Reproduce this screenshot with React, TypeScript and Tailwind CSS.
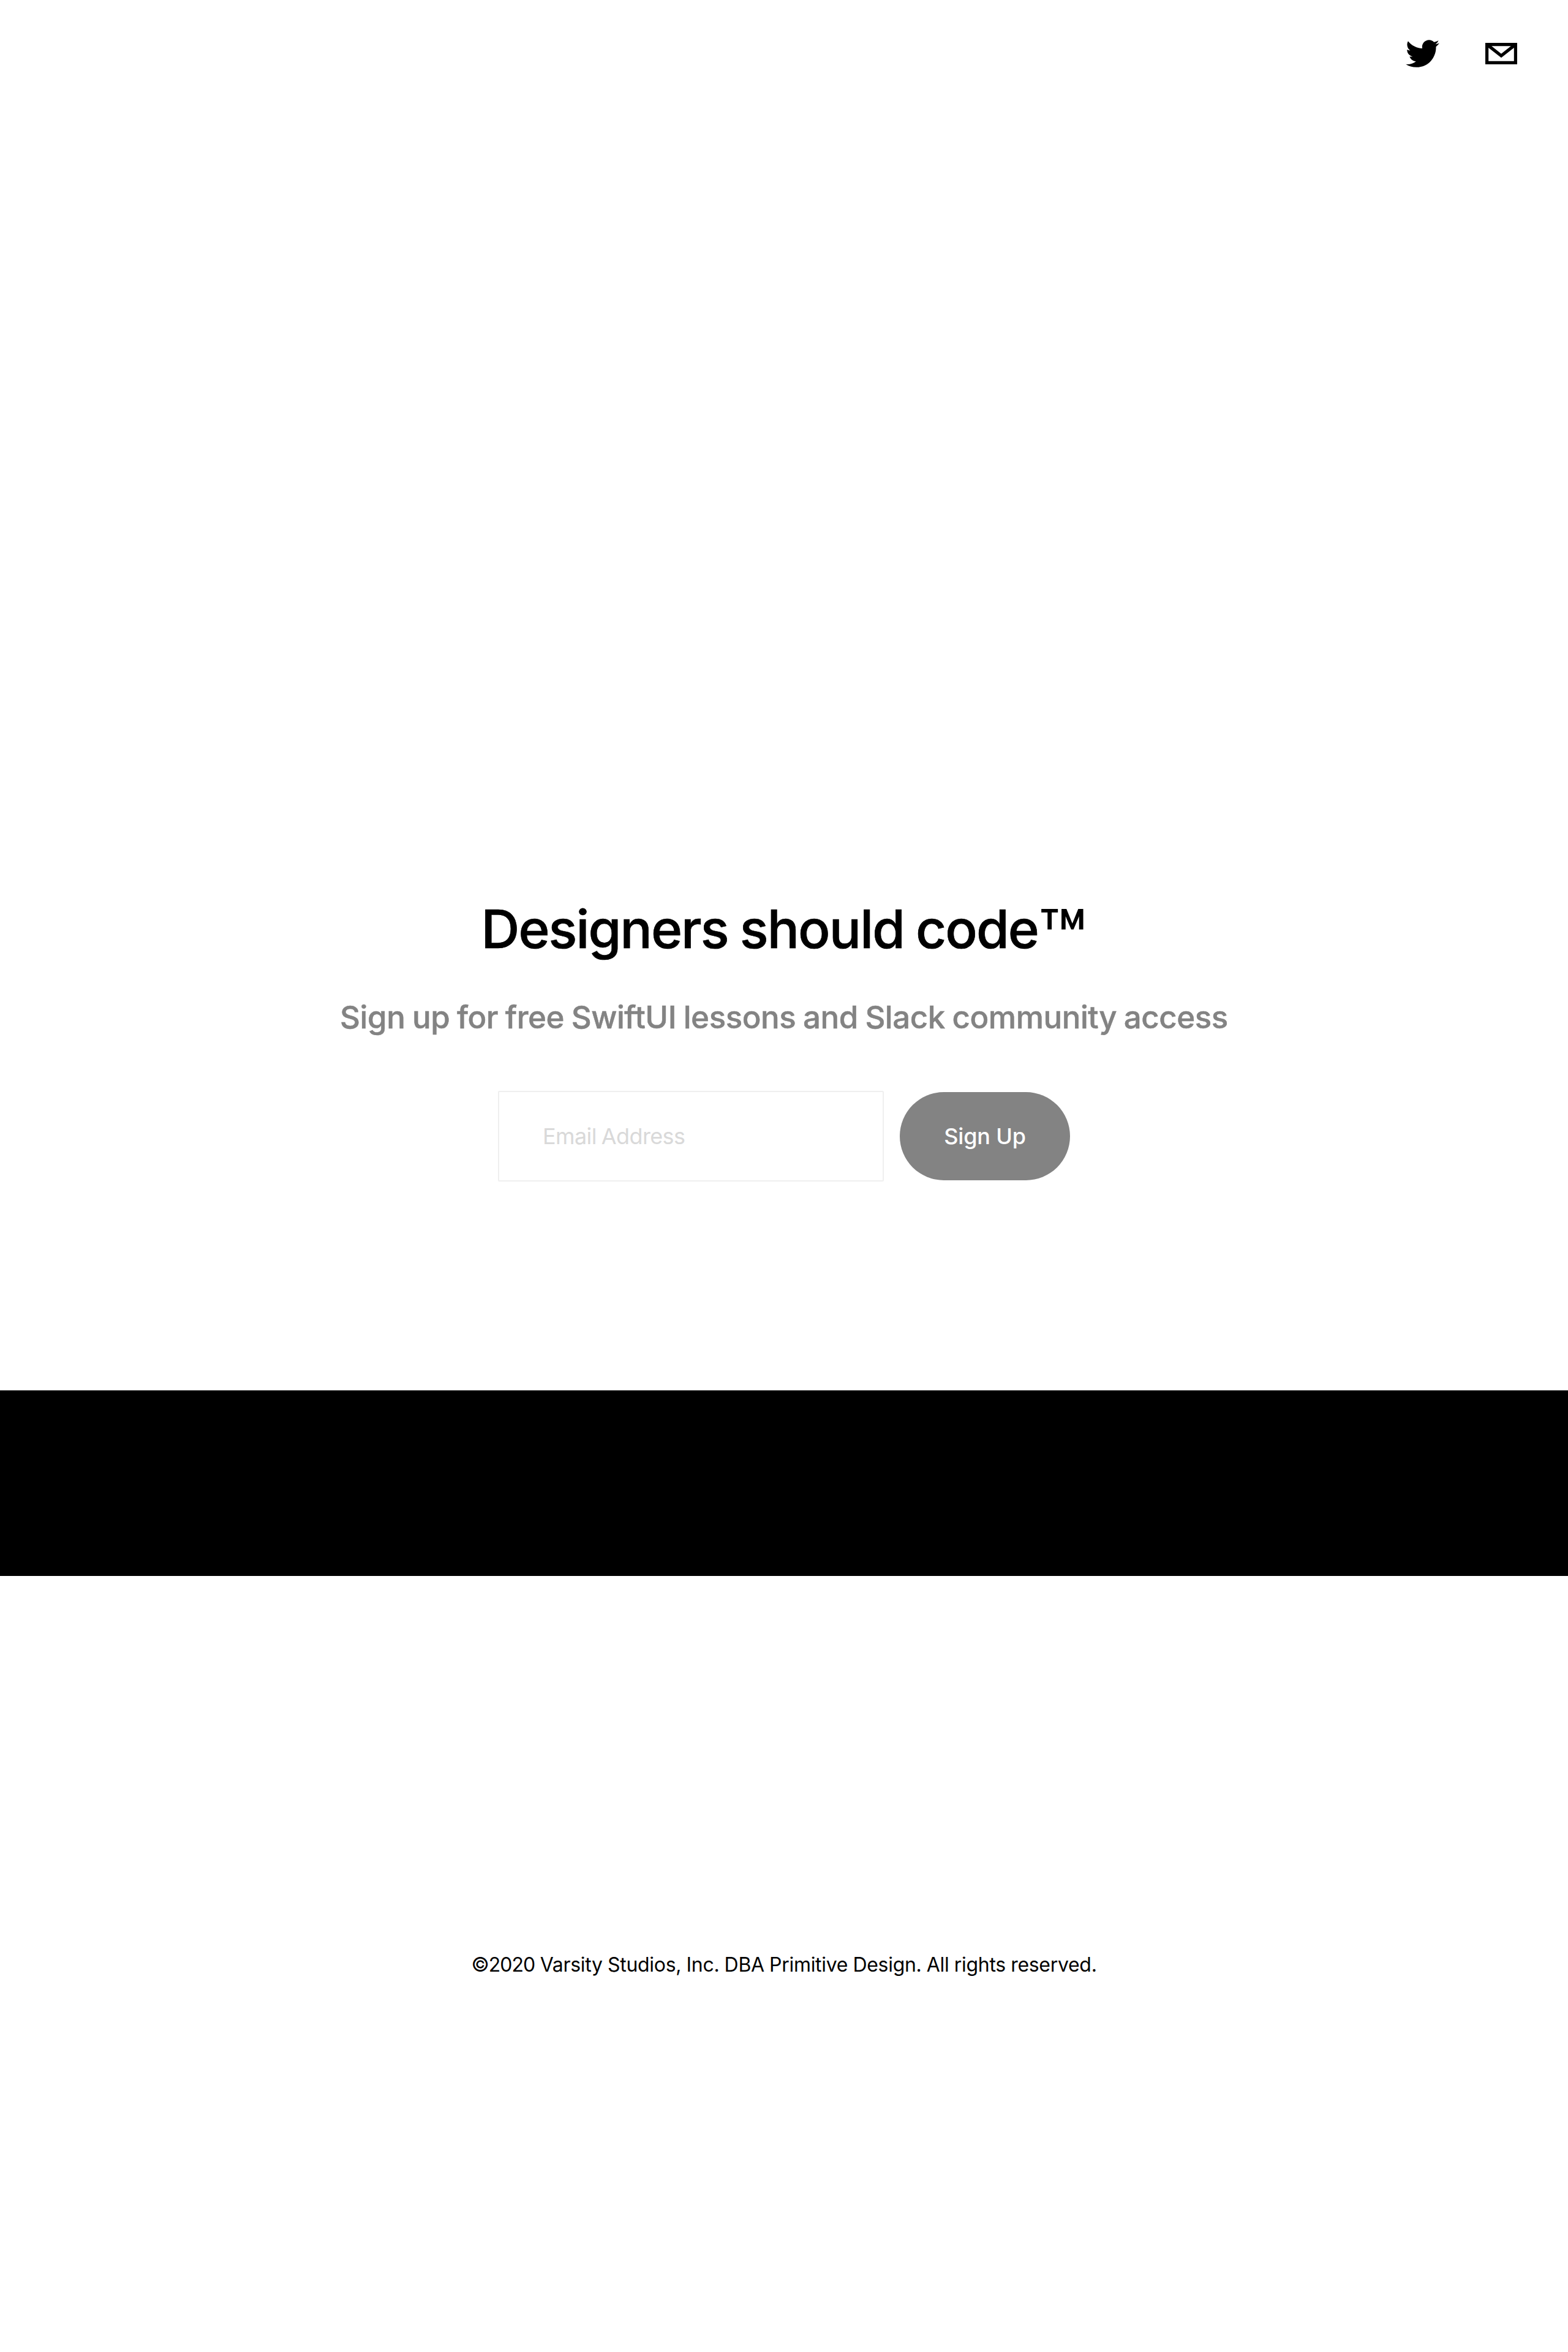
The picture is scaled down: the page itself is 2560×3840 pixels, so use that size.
function TwitterIcon() {
  return (
    <svg viewBox="16 19 32 26" className="h-[45px] w-[55px]" fill="currentColor" aria-hidden="true">
      <path d="M48,22.1c-1.2,0.5-2.4,0.9-3.8,1c1.4-0.8,2.4-2.1,2.9-3.6c-1.3,0.8-2.7,1.3-4.2,1.6C41.7,19.8,40,19,38.2,19c-3.6,0-6.6,2.9-6.6,6.6c0,0.5,0.1,1,0.2,1.5c-5.5-0.3-10.3-2.9-13.5-6.9c-0.6,1-0.9,2.1-0.9,3.3c0,2.3,1.2,4.3,2.9,5.5c-1.1,0-2.1-0.3-3-0.8c0,0,0,0.1,0,0.1c0,3.2,2.3,5.8,5.3,6.4c-0.6,0.1-1.1,0.2-1.7,0.2c-0.4,0-0.8,0-1.2-0.1c0.8,2.6,3.3,4.5,6.1,4.6c-2.2,1.8-5.1,2.8-8.2,2.8c-0.5,0-1.1,0-1.6-0.1c2.9,1.9,6.4,2.9,10.1,2.9c12.1,0,18.7-10,18.7-18.7c0-0.3,0-0.6,0-0.8C46,24.5,47.1,23.4,48,22.1z" />
    </svg>
  );
}

function MailIcon() {
  return (
    <svg viewBox="17 22 30 20" className="h-[35px] w-[52px]" preserveAspectRatio="none" fill="currentColor" aria-hidden="true">
      <path d="M17,22v20h30V22H17z M41.1,25L32,32.1L22.9,25H41.1z M20,39V26.6l12,9.3l12-9.3V39H20z" />
    </svg>
  );
}

export default function App() {
  return (
    <div className="flex h-[3840px] w-[2560px] flex-col bg-white font-['Inter',sans-serif] text-black">
      <header className="flex h-[174px] items-center justify-end gap-[75px] pr-[83px]">
        <a href="#" aria-label="Twitter">
          <TwitterIcon />
        </a>
        <a href="#" aria-label="Email">
          <MailIcon />
        </a>
      </header>

      <main className="flex h-[2096px] flex-col items-center pt-[1291px]">
        <h1 className="h-[104px] text-[87px] leading-[104px] font-medium tracking-[-1.93px] whitespace-nowrap [-webkit-text-stroke:0.7px_currentColor] [word-spacing:-2.2px]">
          Designers should code
          <span className="align-[-29px] text-[128px] leading-0 tracking-normal [-webkit-text-stroke:0px]">™</span>
        </h1>
        <p className="mt-[56px] text-[51px] leading-[72px] font-medium tracking-[-0.45px] whitespace-nowrap text-[#838383] [-webkit-text-stroke:0.5px_currentColor] [word-spacing:-1.5px]">
          Sign up for free SwiftUI lessons and Slack community access
        </p>
        <form className="mt-[84px] flex items-center gap-[26px]">
          <input
            type="email"
            placeholder="Email Address"
            className="h-[148px] w-[630px] rounded-[2px] border-2 border-[#efefef] bg-white px-[71px] text-[36px] tracking-[-0.6px] [word-spacing:-1.6px] placeholder:text-[#d9d9d9]"
          />
          <button
            type="button"
            className="h-[144px] w-[278px] rounded-full bg-[#838383] text-[36px] font-medium tracking-[-0.15px] text-white"
          >
            Sign Up
          </button>
        </form>
      </main>

      <section className="h-[303px] bg-black" />

      <footer className="pt-[611px] text-center">
        <p className="text-[32px] leading-[48px] tracking-[-0.3px] whitespace-nowrap [word-spacing:-0.4px]">
          <span className="tracking-[-0.95px]">©2020</span> Varsity Studios, Inc. DBA Primitive Design. All rights reserved.
        </p>
      </footer>
    </div>
  );
}
